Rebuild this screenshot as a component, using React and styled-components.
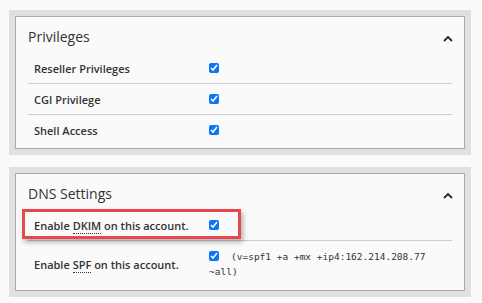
import styled, { createGlobalStyle } from 'styled-components'

const GlobalStyle = createGlobalStyle`
  body {
    margin: 0;
    background: #fafafa;
    font-family: 'Open Sans', 'Noto Sans', sans-serif;
    color: #333;
  }
`

const Page = styled.div`
  display: flex;
  flex-direction: column;
  gap: 12px;
  padding: 10px 11px 0 9px;
`

// PANEL

const Frame = styled.section`
  background: #e0e0e0;
  padding: 6px;
`

const Panel = styled.div`
  background: #fafafa;
  border: 1px solid #aaa;
  padding: 10px 12px 3px 12px;
`

const Header = styled.div`
  display: flex;
  justify-content: space-between;
  align-items: center;
  margin-bottom: 6px;
`

const Title = styled.h2`
  margin: 0;
  font-size: 14px;
  line-height: 20px;
  font-weight: 400;
  color: #333;
`

const Chevron = styled.svg`
  width: 10px;
  height: 7px;
  margin-top: 3px;
  margin-right: -1px;
`

function Toggle() {
  return (
    <Chevron viewBox="0 0 10 7">
      <polyline points="1,6 5,2 9,6" fill="none" stroke="#1d2a44" strokeWidth="1.8" />
    </Chevron>
  )
}

// ROWS

const Row = styled.div`
  position: relative;
  display: grid;
  grid-template-columns: 181px 1fr;
  align-items: center;
  min-height: 30px;
  border-bottom: 1px solid #ccc;

  &:last-child {
    border-bottom: none;
  }
`

const Label = styled.div`
  padding-left: 6px;
  font-size: 11px;
  font-weight: 600;
  color: #333;
`

const Abbr = styled.abbr`
  text-decoration: none;
  border-bottom: 1px dotted #333;
`

const Value = styled.div`
  padding: ${({ $wrap }) => ($wrap ? '8px 0' : '0')};
  font-size: 11px;
  line-height: 14px;
`

const Check = styled.input.attrs({ type: 'checkbox', defaultChecked: true })`
  width: 10px;
  height: 10px;
  margin: 0 12px 0 0;
  vertical-align: -1px;
  accent-color: #0b75f5;
`

const Record = styled.span`
  font-family: 'DejaVu Sans Mono', 'Liberation Mono', monospace;
  font-size: 9.5px;
  color: #333;
`

const Highlight = styled.div`
  position: absolute;
  left: -6px;
  top: -1px;
  width: 219px;
  height: 30px;
  box-sizing: border-box;
  border: 3px solid #e8474b;
  box-shadow: 2px 3px 5px rgba(0, 0, 0, 0.3);
  pointer-events: none;
`

const privileges = ['Reseller Privileges', 'CGI Privilege', 'Shell Access']

export default function App() {
  return (
    <>
      <GlobalStyle />
      <Page>
        <Frame>
          <Panel>
            <Header>
              <Title>Privileges</Title>
              <Toggle />
            </Header>
            {privileges.map((name) => (
              <Row key={name}>
                <Label>{name}</Label>
                <Value>
                  <Check />
                </Value>
              </Row>
            ))}
          </Panel>
        </Frame>
        <Frame>
          <Panel>
            <Header>
              <Title>DNS Settings</Title>
              <Toggle />
            </Header>
            <Row>
              <Highlight />
              <Label>
                Enable <Abbr title="DomainKeys Identified Mail">DKIM</Abbr> on this account.
              </Label>
              <Value>
                <Check />
              </Value>
            </Row>
            <Row>
              <Label>
                Enable <Abbr title="Sender Policy Framework">SPF</Abbr> on this account.
              </Label>
              <Value $wrap>
                <Check />
                <Record>(v=spf1 +a +mx +ip4:162.214.208.77 ~all)</Record>
              </Value>
            </Row>
          </Panel>
        </Frame>
      </Page>
    </>
  )
}
